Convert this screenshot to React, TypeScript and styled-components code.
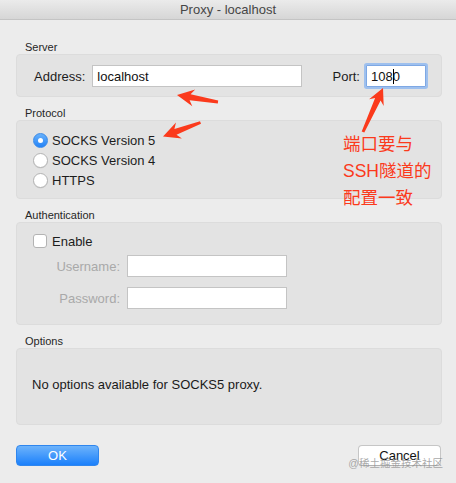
import React from "react";
import styled, { createGlobalStyle } from "styled-components";

const Global = createGlobalStyle`
  html, body { margin: 0; padding: 0; background: #ececec; }
  body { font-family: "Liberation Sans", Arial, "Noto Sans CJK SC", sans-serif; }
  * { box-sizing: border-box; }
`;

const Window = styled.div`
  position: relative;
  width: 456px;
  height: 483px;
  overflow: hidden;
  background: #ececec;
  color: #1c1c1c;
  font-size: 13px;
`;

const TitleBar = styled.div`
  height: 20px;
  border-bottom: 1px solid #c4c4c4;
  background: linear-gradient(#ebebeb, #d6d6d6);
  display: flex;
  align-items: center;
  justify-content: center;
  color: #464646;
  font-size: 13px;
  line-height: 19px;
`;

const Content = styled.div`
  padding: 20px 14px 0 16px;
  display: flex;
  flex-direction: column;
`;

const Section = styled.section`
  display: flex;
  flex-direction: column;
  & + & { margin-top: 9px; }
`;

const SectionLabel = styled.div`
  font-size: 11px;
  line-height: 14px;
  padding-left: 9px;
  color: #262626;
`;

const Box = styled.div<{ $height?: number }>`
  background: #e3e3e3;
  border: 1px solid #dcdcdc;
  border-radius: 4px;
  ${(p) => (p.$height ? `height: ${p.$height}px;` : "")}
`;

const ServerRow = styled(Box)`
  display: flex;
  align-items: center;
  padding: 10px 15px 9px 17px;
`;

const FieldLabel = styled.label<{ $muted?: boolean }>`
  color: ${(p) => (p.$muted ? "#a9a9a9" : "#1c1c1c")};
  font-size: 13px;
  white-space: nowrap;
`;

const TextInput = styled.div<{ $width: number; $focused?: boolean }>`
  width: ${(p) => p.$width}px;
  height: 22px;
  background: #fff;
  border: 1px solid ${(p) => (p.$focused ? "#7ea8e4" : "#c4c4c4")};
  ${(p) => (p.$focused ? "box-shadow: 0 0 0 2px #9ec0ee; border-radius: 1px;" : "")}
  display: flex;
  align-items: center;
  padding-left: 4px;
  font-size: 13px;
  color: #111;
`;

const Spacer = styled.div<{ $w?: number }>`
  flex: ${(p) => (p.$w ? `0 0 ${p.$w}px` : "1")};
`;

const Caret = styled.span`
  display: inline-block;
  width: 1px;
  height: 15px;
  background: #000;
  vertical-align: middle;
  margin: 0 -1px 0 0;
`;

const RadioList = styled(Box)`
  display: flex;
  flex-direction: column;
  padding: 9px 0 8px 16px;
`;

const RadioRow = styled.div`
  height: 20px;
  display: flex;
  align-items: center;
  gap: 4px;
  font-size: 13px;
`;

const Radio = styled.span<{ $checked?: boolean }>`
  width: 15px;
  height: 15px;
  border-radius: 50%;
  display: flex;
  align-items: center;
  justify-content: center;
  ${(p) =>
    p.$checked
      ? "background: linear-gradient(#68b1fb, #2483f7); border: 1px solid #3a8ae8;"
      : "background: #fff; border: 1px solid #b3b3b3; box-shadow: 0 0.5px 0.5px rgba(0,0,0,0.08);"}
  &::after {
    content: "";
    width: 5px;
    height: 5px;
    border-radius: 50%;
    background: #fff;
    display: ${(p) => (p.$checked ? "block" : "none")};
  }
`;

const AuthBox = styled(Box)`
  padding: 8px 0 15px 15px;
  display: grid;
  grid-template-columns: 88px 160px;
  column-gap: 7px;
  row-gap: 0;
  align-items: center;
`;

const CheckRow = styled.div`
  grid-column: 1 / span 2;
  height: 20px;
  display: flex;
  align-items: center;
  gap: 5px;
  font-size: 13px;
  margin-bottom: 4px;
`;

const Checkbox = styled.span`
  width: 14px;
  height: 14px;
  border-radius: 3px;
  background: #fff;
  border: 1px solid #b3b3b3;
  margin-left: 1px;
`;

const RightLabel = styled(FieldLabel)<{ $gap?: boolean }>`
  text-align: right;
  ${(p) => (p.$gap ? "margin-top: 10px;" : "")}
`;

const AuthField = styled(TextInput)<{ $gap?: boolean }>`
  ${(p) => (p.$gap ? "margin-top: 10px;" : "")}
`;

const OptionsBox = styled(Box)`
  display: flex;
  align-items: center;
  padding: 0 0 4px 15px;
  font-size: 13px;
  color: #1a1a1a;
`;

const ButtonRow = styled.div`
  display: flex;
  justify-content: space-between;
  margin-top: 20px;
  padding-right: 1px;
`;

const Button = styled.div<{ $primary?: boolean }>`
  width: 83px;
  height: 21px;
  border-radius: 4px;
  display: flex;
  align-items: center;
  justify-content: center;
  font-size: 13px;
  ${(p) =>
    p.$primary
      ? "background: linear-gradient(#6db3fb, #1b80fb); color: #fff; border: 1px solid #2f86ee;"
      : "background: #fff; color: #111; border: 1px solid #c6c6c6; border-bottom-color: #b0b0b0;"}
`;

const Annotation = styled.div`
  position: absolute;
  left: 343px;
  top: 131px;
  color: #fb3a1c;
  font-size: 17.5px;
  line-height: 27px;
  font-family: "Liberation Sans", Arial, "Noto Sans CJK SC", sans-serif;
  white-space: nowrap;
`;

const Overlay = styled.svg`
  position: absolute;
  left: 0;
  top: 0;
  pointer-events: none;
`;

const Watermark = styled.div`
  position: absolute;
  right: 13px;
  bottom: 13px;
  font-size: 10.5px;
  color: rgba(140, 140, 140, 0.75);
  font-family: "Liberation Sans", "Noto Sans CJK SC", sans-serif;
  white-space: nowrap;
`;

type P = [number, number];

function arrowPath(tail: P, tip: P, headLen: number, headW: number, tailW: number, baseW: number): string {
  const dx = tip[0] - tail[0];
  const dy = tip[1] - tail[1];
  const len = Math.hypot(dx, dy);
  const ux = dx / len;
  const uy = dy / len;
  const nx = -uy;
  const ny = ux;
  const bx = tip[0] - ux * headLen;
  const by = tip[1] - uy * headLen;
  const ix = tip[0] - ux * headLen * 0.78;
  const iy = tip[1] - uy * headLen * 0.78;
  const pts: P[] = [
    tip,
    [bx + nx * headW, by + ny * headW],
    [ix + nx * baseW, iy + ny * baseW],
    [tail[0] + nx * tailW, tail[1] + ny * tailW],
    [tail[0] - nx * tailW, tail[1] - ny * tailW],
    [ix - nx * baseW, iy - ny * baseW],
    [bx - nx * headW, by - ny * headW],
  ];
  return "M" + pts.map((p) => `${p[0].toFixed(1)},${p[1].toFixed(1)}`).join(" L") + " Z";
}

const arrows: { tail: P; tip: P; hl: number; hw: number }[] = [
  { tail: [218, 102], tip: [177, 95], hl: 17, hw: 8.5 },
  { tail: [200.5, 122.5], tip: [163, 136.5], hl: 17, hw: 8.5 },
  { tail: [363, 132], tip: [383, 88], hl: 16, hw: 8 },
];

export default function App() {
  return (
    <Window>
      <Global />
      <TitleBar>Proxy - localhost</TitleBar>
      <Content>
        <Section>
          <SectionLabel>Server</SectionLabel>
          <ServerRow>
            <FieldLabel>Address:</FieldLabel>
            <Spacer $w={7} />
            <TextInput $width={210}>localhost</TextInput>
            <Spacer />
            <FieldLabel>Port:</FieldLabel>
            <Spacer $w={6} />
            <TextInput $width={60} $focused>
              108<Caret />0
            </TextInput>
          </ServerRow>
        </Section>

        <Section>
          <SectionLabel>Protocol</SectionLabel>
          <RadioList>
            <RadioRow>
              <Radio $checked />
              SOCKS Version 5
            </RadioRow>
            <RadioRow>
              <Radio />
              SOCKS Version 4
            </RadioRow>
            <RadioRow>
              <Radio />
              HTTPS
            </RadioRow>
          </RadioList>
        </Section>

        <Section>
          <SectionLabel>Authentication</SectionLabel>
          <AuthBox>
            <CheckRow>
              <Checkbox />
              Enable
            </CheckRow>
            <RightLabel $muted>Username:</RightLabel>
            <AuthField $width={160} />
            <RightLabel $muted $gap>Password:</RightLabel>
            <AuthField $width={160} $gap />
          </AuthBox>
        </Section>

        <Section>
          <SectionLabel>Options</SectionLabel>
          <OptionsBox $height={77}>No options available for SOCKS5 proxy.</OptionsBox>
        </Section>

        <ButtonRow>
          <Button $primary>OK</Button>
          <Button>Cancel</Button>
        </ButtonRow>
      </Content>

      <Overlay width={456} height={483} viewBox="0 0 456 483">
        {arrows.map((a, i) => (
          <path key={i} d={arrowPath(a.tail, a.tip, a.hl, a.hw, 1.4, 3)} fill="#fb3a1c" />
        ))}
      </Overlay>

      <Annotation>
        端口要与
        <br />
        SSH隧道的
        <br />
        配置一致
      </Annotation>

      <Watermark>@稀土掘金技术社区</Watermark>
    </Window>
  );
}
